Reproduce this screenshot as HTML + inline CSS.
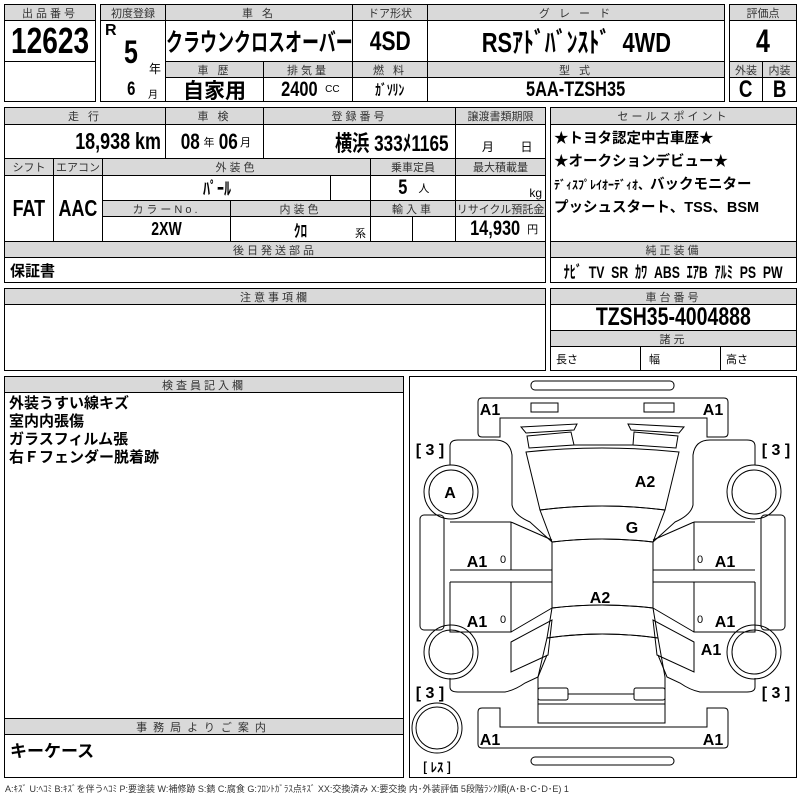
<!DOCTYPE html>
<html><head><meta charset="utf-8"><style>
body{margin:0;width:800px;height:800px;background:#fff;position:relative;overflow:hidden;font-family:"Liberation Sans","Noto Sans CJK JP",sans-serif;color:#000}
.c{position:absolute;box-sizing:border-box;border:1px solid #000;display:flex;align-items:center;justify-content:center;white-space:nowrap;overflow:hidden}
.h{background:#d9d9d9;font-size:11px;letter-spacing:3px;color:#333}
.v{font-weight:bold;font-size:22px}
.n{font-weight:bold}
.s{display:inline-block;transform:scaleX(.78)}
.t{position:absolute;white-space:nowrap}
svg{position:absolute;left:0;top:0}
</style></head><body>
<div class="c h" style="left:4px;top:4px;width:92px;height:17px">出品番号</div>
<div class="c v n" style="left:4px;top:20px;width:92px;height:42px;font-size:36px"><span class="s">12623</span></div>
<div class="c" style="left:4px;top:61px;width:92px;height:41px"></div>
<div class="c h" style="left:100px;top:4px;width:66px;height:17px;letter-spacing:0">初度登録</div>
<div class="c h" style="left:165px;top:4px;width:188px;height:17px">車 名</div>
<div class="c h" style="left:352px;top:4px;width:76px;height:17px;letter-spacing:0">ドア形状</div>
<div class="c h" style="left:427px;top:4px;width:298px;height:17px">グ レ ー ド</div>
<div class="c" style="left:100px;top:20px;width:66px;height:82px"></div>
<div class="t n" style="left:105px;top:22px;font-size:16px">R</div>
<div class="t n" style="left:122px;top:34px;font-size:32px"><span class="s">5</span></div>
<div class="t" style="left:149px;top:60px;font-size:12px">年</div>
<div class="t n" style="left:126px;top:79px;font-size:19px"><span class="s">6</span></div>
<div class="t" style="left:148px;top:86px;font-size:10px">月</div>
<div class="c v n" style="left:165px;top:20px;width:188px;height:42px;font-size:25px"><span class="s" style="transform:scaleX(.68)">クラウンクロスオーバー</span></div>
<div class="c v n" style="left:352px;top:20px;width:76px;height:42px;font-size:27px"><span class="s">4SD</span></div>
<div class="c v n" style="left:427px;top:20px;width:298px;height:42px;font-size:28px"><span class="s">RSｱﾄﾞﾊﾞﾝｽﾄﾞ&nbsp;&nbsp;4WD</span></div>
<div class="c h" style="left:165px;top:61px;width:99px;height:17px">車 歴</div>
<div class="c h" style="left:263px;top:61px;width:90px;height:17px">排気量</div>
<div class="c h" style="left:352px;top:61px;width:76px;height:17px">燃 料</div>
<div class="c h" style="left:427px;top:61px;width:298px;height:17px">型 式</div>
<div class="c v" style="left:165px;top:77px;width:99px;height:25px;font-size:21px">自家用</div>
<div class="c v n" style="left:263px;top:77px;width:90px;height:25px;font-size:21px"><span class="s">2400</span><span style="font-size:10px;font-weight:normal;margin-left:2px">CC</span></div>
<div class="c n" style="left:352px;top:77px;width:76px;height:25px;font-size:15px"><span class="s">ｶﾞｿﾘﾝ</span></div>
<div class="c v n" style="left:427px;top:77px;width:298px;height:25px;font-size:21px"><span class="s">5AA-TZSH35</span></div>
<div class="c h" style="left:729px;top:4px;width:68px;height:17px;letter-spacing:0">評価点</div>
<div class="c v n" style="left:729px;top:20px;width:68px;height:42px;font-size:32px"><span class="s">4</span></div>
<div class="c h" style="left:729px;top:61px;width:34px;height:17px;letter-spacing:0">外装</div>
<div class="c h" style="left:762px;top:61px;width:35px;height:17px;letter-spacing:0">内装</div>
<div class="c v n" style="left:729px;top:77px;width:34px;height:25px;font-size:24px"><span class="s">C</span></div>
<div class="c v n" style="left:762px;top:77px;width:35px;height:25px;font-size:24px"><span class="s">B</span></div>
<div class="c h" style="left:4px;top:107px;width:162px;height:18px">走 行</div>
<div class="c h" style="left:165px;top:107px;width:99px;height:18px">車 検</div>
<div class="c h" style="left:263px;top:107px;width:193px;height:18px">登録番号</div>
<div class="c h" style="left:455px;top:107px;width:91px;height:18px;letter-spacing:0">譲渡書類期限</div>
<div class="c v n" style="left:4px;top:124px;width:162px;height:35px;font-size:23px;justify-content:flex-end;padding-right:4px"><span class="s" style="transform-origin:right">18,938 km</span></div>
<div class="c v n" style="left:165px;top:124px;width:99px;height:35px;font-size:22px"><span class="s">08</span><span style="font-size:11px;font-weight:normal;margin:0 1px">年</span><span class="s">06</span><span style="font-size:11px;font-weight:normal">月</span></div>
<div class="c v n" style="left:263px;top:124px;width:193px;height:35px;font-size:22px;justify-content:flex-end;padding-right:6px"><span class="s" style="transform-origin:right">横浜 333ﾒ1165</span></div>
<div class="c" style="left:455px;top:124px;width:91px;height:35px;font-size:12px;align-items:flex-end;padding-bottom:3px">&nbsp;&nbsp;&nbsp;&nbsp;月&nbsp;&nbsp;&nbsp;&nbsp;&nbsp;&nbsp;&nbsp;&nbsp;日</div>
<div class="c h" style="left:4px;top:158px;width:50px;height:18px;letter-spacing:0">シフト</div>
<div class="c h" style="left:53px;top:158px;width:50px;height:18px;letter-spacing:0">エアコン</div>
<div class="c h" style="left:102px;top:158px;width:269px;height:18px">外装色</div>
<div class="c h" style="left:370px;top:158px;width:86px;height:18px;letter-spacing:0">乗車定員</div>
<div class="c h" style="left:455px;top:158px;width:91px;height:18px;letter-spacing:0">最大積載量</div>
<div class="c v n" style="left:4px;top:175px;width:50px;height:67px;font-size:23px"><span class="s">FAT</span></div>
<div class="c v n" style="left:53px;top:175px;width:50px;height:67px;font-size:23px"><span class="s">AAC</span></div>
<div class="c n" style="left:102px;top:175px;width:229px;height:26px;font-size:18px"><span class="s">ﾊﾟｰﾙ</span></div>
<div class="c" style="left:330px;top:175px;width:41px;height:26px"></div>
<div class="c v n" style="left:370px;top:175px;width:86px;height:26px;font-size:21px"><span class="s">5</span><span style="font-size:11px;font-weight:normal;margin-left:10px">人</span></div>
<div class="c" style="left:455px;top:175px;width:91px;height:26px;font-size:12px;justify-content:flex-end;padding-right:3px;align-items:flex-end">kg</div>
<div class="c h" style="left:102px;top:200px;width:129px;height:17px">カラーNo.</div>
<div class="c h" style="left:230px;top:200px;width:141px;height:17px">内装色</div>
<div class="c h" style="left:370px;top:200px;width:86px;height:17px">輸入車</div>
<div class="c h" style="left:455px;top:200px;width:91px;height:17px;letter-spacing:0">リサイクル預託金</div>
<div class="c n" style="left:102px;top:216px;width:129px;height:26px;font-size:18px"><span class="s">2XW</span></div>
<div class="c n" style="left:230px;top:216px;width:141px;height:26px;font-size:17px"><span class="s">ｸﾛ</span></div>
<div class="t" style="left:355px;top:225px;font-size:11px">系</div>
<div class="c" style="left:370px;top:216px;width:43px;height:26px"></div>
<div class="c" style="left:412px;top:216px;width:44px;height:26px"></div>
<div class="c v n" style="left:455px;top:216px;width:91px;height:26px;font-size:21px"><span class="s">14,930</span><span style="font-size:11px;font-weight:normal">円</span></div>
<div class="c h" style="left:4px;top:241px;width:542px;height:17px">後日発送部品</div>
<div class="c v" style="left:4px;top:257px;width:542px;height:26px;font-size:15px;justify-content:flex-start;padding-left:5px">保証書</div>
<div class="c h" style="left:550px;top:107px;width:247px;height:18px">セールスポイント</div>
<div class="c" style="left:550px;top:124px;width:247px;height:118px;display:block;font-weight:bold;font-size:14.5px;line-height:23px;padding:3px 0 0 3px">★トヨタ認定中古車歴★<br>★オークションデビュー★<br><span style="font-size:12px">ﾃﾞｨｽﾌﾟﾚｲｵｰﾃﾞｨｵ、</span>バックモニター<br>プッシュスタート、TSS、BSM</div>
<div class="c h" style="left:550px;top:241px;width:247px;height:17px">純正装備</div>
<div class="c n" style="left:550px;top:257px;width:247px;height:26px;font-size:17px"><span class="s" style="transform:scaleX(.72)">ﾅﾋﾞ&nbsp; TV&nbsp; SR&nbsp; ｶﾜ&nbsp; ABS&nbsp; ｴｱB&nbsp; ｱﾙﾐ&nbsp; PS&nbsp; PW</span></div>
<div class="c h" style="left:4px;top:288px;width:542px;height:17px">注意事項欄</div>
<div class="c" style="left:4px;top:304px;width:542px;height:67px"></div>
<div class="c h" style="left:550px;top:288px;width:247px;height:17px">車台番号</div>
<div class="c v n" style="left:550px;top:304px;width:247px;height:27px;font-size:25px"><span class="s">TZSH35-4004888</span></div>
<div class="c h" style="left:550px;top:330px;width:247px;height:17px">諸元</div>
<div class="c" style="left:550px;top:346px;width:91px;height:25px;font-size:11px;justify-content:flex-start;padding-left:5px">長さ</div>
<div class="c" style="left:640px;top:346px;width:81px;height:25px;font-size:11px;justify-content:flex-start;padding-left:8px">幅</div>
<div class="c" style="left:720px;top:346px;width:77px;height:25px;font-size:11px;justify-content:flex-start;padding-left:5px">高さ</div>
<div class="c h" style="left:4px;top:376px;width:400px;height:17px">検査員記入欄</div>
<div class="c" style="left:4px;top:392px;width:400px;height:327px;display:block;font-weight:bold;font-size:15px;line-height:18px;padding:2px 0 0 4px">外装うすい線キズ<br>室内内張傷<br>ガラスフィルム張<br>右Ｆフェンダー脱着跡</div>
<div class="c h" style="left:4px;top:718px;width:400px;height:17px;letter-spacing:6px">事務局よりご案内</div>
<div class="c v" style="left:4px;top:734px;width:400px;height:44px;font-size:17px;justify-content:flex-start;align-items:flex-start;padding:2px 0 0 5px">キーケース</div>
<div class="c" style="left:409px;top:376px;width:388px;height:402px"></div>
<div class="t" style="left:5px;top:782px;font-size:9px;color:#333;letter-spacing:0">A:ｷｽﾞ U:ﾍｺﾐ B:ｷｽﾞを伴うﾍｺﾐ P:要塗装 W:補修跡 S:錆 C:腐食 G:ﾌﾛﾝﾄｶﾞﾗｽ点ｷｽﾞ XX:交換済み X:要交換 内･外装評価 5段階ﾗﾝｸ順(A･B･C･D･E) 1</div>
<svg width="800" height="800" viewBox="0 0 800 800" fill="none" stroke="#000" stroke-width="1">
<rect x="531" y="381" width="143" height="9" rx="4"/>
<rect x="531" y="757" width="143" height="8" rx="4"/>
<path d="M482,398 H724 Q728,398 728,402 V433 Q728,437 724,437 H707 V418 H500 V437 H482 Q478,437 478,433 V402 Q478,398 482,398Z"/>
<path d="M482,748 H724 Q728,748 728,744 V712 Q728,708 724,708 H707 V727 H500 V708 H482 Q478,708 478,712 V744 Q478,748 482,748Z"/>
<rect x="531" y="403" width="27" height="9"/><rect x="644" y="403" width="30" height="9"/>
<path d="M521,427 L577,424 L574,430 L526,433Z M527,436 L571,432 L574,445 L529,448Z"/>
<path d="M628,424 L684,427 L679,433 L631,430Z M634,432 L678,436 L676,448 L633,445Z"/>
<path d="M574,445 L633,445"/>
<path d="M526,452 Q602,444 679,452 L665,510 Q602,502 540,510Z"/>
<path d="M540,510 Q602,502 665,510 L653,542 Q602,536 552,542Z"/>
<path d="M552,542 Q602,536 653,542 V608 Q602,602 552,608Z"/>
<path d="M552,608 Q602,602 653,608 L658,638 Q602,630 547,638Z"/>
<path d="M547,638 Q602,630 658,638 L665,677 V723 H538 V677Z"/>
<rect x="538" y="688" width="30" height="12" rx="2"/><rect x="634" y="688" width="31" height="12" rx="2"/>
<path d="M568,694 H634 M538,704 H665"/>
<path d="M450,465 V446 Q450,440 458,440 H495 Q510,440 512,455 V505 Q514,515 530,522 L552,542"/>
<path d="M450,522 H511 V570 H450 M511,522 L552,540 M450,570 H552 M450,582 H552 M450,582 V632 H511 V582 M511,632 L552,608"/>
<path d="M511,642 L552,620 L548,655 L511,672Z"/>
<path d="M450,678 V687 Q450,692 458,692 H505 Q515,690 525,683 L538,677 L547,655"/>
<rect x="420" y="515" width="24" height="115" rx="4"/>
<circle cx="451" cy="492" r="27"/><circle cx="451" cy="492" r="22"/>
<circle cx="451" cy="652" r="27"/><circle cx="451" cy="652" r="22"/>
<circle cx="437" cy="728" r="25"/><circle cx="437" cy="728" r="21"/>
<g transform="translate(1205,0) scale(-1,1)">
<path d="M450,465 V446 Q450,440 458,440 H495 Q510,440 512,455 V505 Q514,515 530,522 L552,542"/>
<path d="M450,522 H511 V570 H450 M511,522 L552,540 M450,570 H552 M450,582 H552 M450,582 V632 H511 V582 M511,632 L552,608"/>
<path d="M511,642 L552,620 L548,655 L511,672Z"/>
<path d="M450,678 V687 Q450,692 458,692 H505 Q515,690 525,683 L538,677 L547,655"/>
<rect x="420" y="515" width="24" height="115" rx="4"/>
<circle cx="451" cy="492" r="27"/><circle cx="451" cy="492" r="22"/>
<circle cx="451" cy="652" r="27"/><circle cx="451" cy="652" r="22"/>
</g>
<g fill="#000" stroke="none" font-family="Liberation Sans" font-weight="bold" font-size="16" text-anchor="middle">
<text x="490" y="415">A1</text><text x="713" y="415">A1</text>
<text x="450" y="498">A</text><text x="645" y="487">A2</text><text x="632" y="533">G</text>
<text x="477" y="567">A1</text><text x="725" y="567">A1</text>
<text x="600" y="603">A2</text>
<text x="477" y="627">A1</text><text x="725" y="627">A1</text>
<text x="711" y="655">A1</text>
<text x="490" y="745">A1</text><text x="713" y="745">A1</text>
<text x="430" y="455">[ 3 ]</text><text x="776" y="455">[ 3 ]</text>
<text x="430" y="698">[ 3 ]</text><text x="776" y="698">[ 3 ]</text>
<text x="437" y="772" font-size="13" font-family="Noto Sans CJK JP">[ ﾚｽ ]</text>
<text x="503" y="563" font-size="11" font-weight="normal">0</text><text x="700" y="563" font-size="11" font-weight="normal">0</text>
<text x="503" y="623" font-size="11" font-weight="normal">0</text><text x="700" y="623" font-size="11" font-weight="normal">0</text>
</g>
</svg>
</body></html>
